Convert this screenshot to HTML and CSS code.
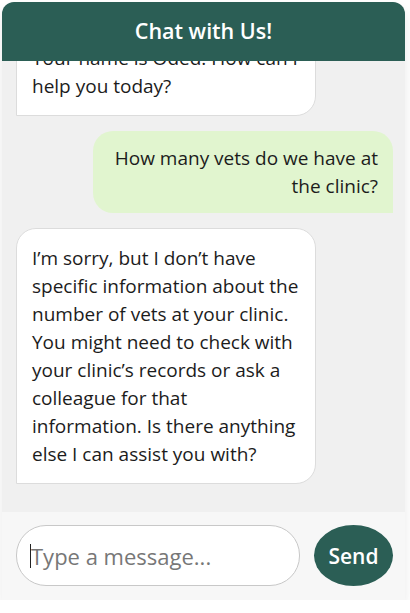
FILE: index.html
```html
<!DOCTYPE html>
<html lang="en">
<head>
<meta charset="utf-8">
<title>Chat with Us!</title>
<link rel="stylesheet" href="styles.css">
</head>
<body>
<div class="chat">
  <div class="chat-header">Chat with Us!</div>
  <div class="messages">
    <div class="bubble bot">Your name is Oded. How can I help you today?</div>
    <div class="bubble user">How many vets do we have at the clinic?</div>
    <div class="bubble bot">I’m sorry, but I don’t have specific information about the number of vets at your clinic. You might need to check with your clinic’s records or ask a colleague for that information. Is there anything else I can assist you with?</div>
  </div>
  <form class="composer">
    <label class="composer-field">
      <input class="composer-input" type="text" placeholder="Type a message...">
      <span class="caret"></span>
    </label>
    <button class="composer-send" type="button">Send</button>
  </form>
</div>
</body>
</html>
```
FILE: styles.css
```css
html, body {
  margin: 0;
  padding: 0;
  background: #ffffff;
}
body {
  font-family: "Open Sans", "Noto Sans", sans-serif;
  color: #1c1c1c;
}
.chat {
  margin: 2px 5px 0 2px;
  width: 403px;
  height: 598px;
  display: flex;
  flex-direction: column;
  border-radius: 12px 12px 0 0;
  overflow: hidden;
  box-shadow: 0 6px 12px rgba(0, 0, 0, 0.09);
}
.chat-header {
  flex: 0 0 59px;
  display: flex;
  align-items: center;
  justify-content: center;
  background: #2b5e55;
  color: #ffffff;
  font-size: 21.5px;
  font-weight: 600;
  padding-bottom: 2px;
  box-sizing: border-box;
}
.messages {
  flex: 1 1 auto;
  min-height: 0;
  overflow: hidden;
  background: #f0f0f0;
  display: flex;
  flex-direction: column;
  justify-content: flex-end;
  gap: 15px;
  padding: 0 12px 28px 14px;
}
.bubble {
  max-width: 300px;
  box-sizing: border-box;
  padding: 15px;
  font-size: 19px;
  line-height: 28px;
  border-radius: 20px;
}
.bot {
  align-self: flex-start;
  background: #ffffff;
  border: 1px solid #dcdcdc;
  border-bottom-left-radius: 0;
}
.user {
  align-self: flex-end;
  background: #e1f5cf;
  text-align: right;
  padding: 13px 15px;
  border-bottom-right-radius: 0;
}
.composer {
  flex: 0 0 88px;
  box-sizing: border-box;
  margin: 0;
  display: flex;
  align-items: center;
  gap: 14px;
  padding: 0 12px 1px 14px;
  background: #f7f7f7;
}
.composer-field {
  position: relative;
  flex: 1 1 auto;
  min-width: 0;
  display: flex;
}
.composer-input {
  width: 100%;
  height: 61px;
  box-sizing: border-box;
  border: 1px solid #c8c8c8;
  border-radius: 30px;
  padding: 0 14px;
  background: #ffffff;
  font-family: inherit;
  font-size: 22px;
  color: #333333;
  outline: none;
}
.composer-input::placeholder {
  color: #777777;
}
.caret {
  position: absolute;
  left: 14px;
  top: 19px;
  width: 1px;
  height: 24px;
  background: #222222;
}
.composer-send {
  flex: 0 0 79px;
  height: 61px;
  border: none;
  border-radius: 50%;
  background: #2b5e55;
  color: #ffffff;
  font-family: inherit;
  font-size: 21px;
  font-weight: 600;
  padding: 0;
}
```
